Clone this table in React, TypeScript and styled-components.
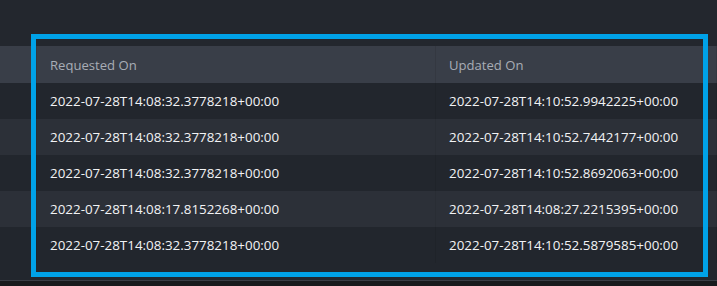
import React from "react";
import styled, { createGlobalStyle } from "styled-components";

const Global = createGlobalStyle`
  html, body { margin: 0; padding: 0; background: #23272e; }
  body { width: 717px; height: 286px; overflow: hidden; }
  * { box-sizing: border-box; }
`;

const Page = styled.div`
  position: relative;
  width: 717px;
  height: 286px;
  background: #23272e;
  display: flex;
  flex-direction: column;
  font-family: "Open Sans", "Segoe UI", sans-serif;
  font-size: 13px;
  overflow: hidden;
`;

const TopSpace = styled.div`
  height: 46px;
  flex: none;
`;

const Table = styled.div`
  display: grid;
  grid-template-columns: 37px 399px 1fr;
  flex: none;
`;

const HeadCell = styled.div`
  height: 37px;
  display: flex;
  align-items: center;
  padding-left: 13px;
  background: #393e48;
  color: #a8adb6;
  font-size: 13.1px;
  border-right: 1px solid #343841;
  white-space: nowrap;
`;

const Cell = styled.div<{ $alt?: boolean }>`
  height: 36px;
  display: flex;
  align-items: center;
  padding-left: 13px;
  background: ${(p) => (p.$alt ? "#2c3038" : "#22262d")};
  color: #f2f3f5;
  font-size: 13.4px;
  border-right: 1px solid ${(p) => (p.$alt ? "#292d34" : "#1f2329")};
  white-space: nowrap;
`;

const Rest = styled.div`
  height: 17px;
  flex: none;
  background: #22262d;
`;

const FooterLine = styled.div`
  height: 1px;
  flex: none;
  background: #3a3e46;
`;

const Footer = styled.div`
  flex: 1;
  background: #181a1d;
`;

const Highlight = styled.div`
  position: absolute;
  left: 31px;
  top: 34px;
  width: 677px;
  height: 243px;
  border: 5px solid #00a2e8;
  pointer-events: none;
`;

const rows = [
  ["2022-07-28T14:08:32.3778218+00:00", "2022-07-28T14:10:52.9942225+00:00"],
  ["2022-07-28T14:08:32.3778218+00:00", "2022-07-28T14:10:52.7442177+00:00"],
  ["2022-07-28T14:08:32.3778218+00:00", "2022-07-28T14:10:52.8692063+00:00"],
  ["2022-07-28T14:08:17.8152268+00:00", "2022-07-28T14:08:27.2215395+00:00"],
  ["2022-07-28T14:08:32.3778218+00:00", "2022-07-28T14:10:52.5879585+00:00"],
];

export default function App() {
  return (
    <Page>
      <Global />
      <TopSpace />
      <Table>
        <HeadCell />
        <HeadCell>Requested On</HeadCell>
        <HeadCell>Updated On</HeadCell>
        {rows.map((r, i) => (
          <React.Fragment key={i}>
            <Cell $alt={i % 2 === 1} />
            <Cell $alt={i % 2 === 1}>{r[0]}</Cell>
            <Cell $alt={i % 2 === 1}>{r[1]}</Cell>
          </React.Fragment>
        ))}
      </Table>
      <Rest />
      <FooterLine />
      <Footer />
      <Highlight />
    </Page>
  );
}
